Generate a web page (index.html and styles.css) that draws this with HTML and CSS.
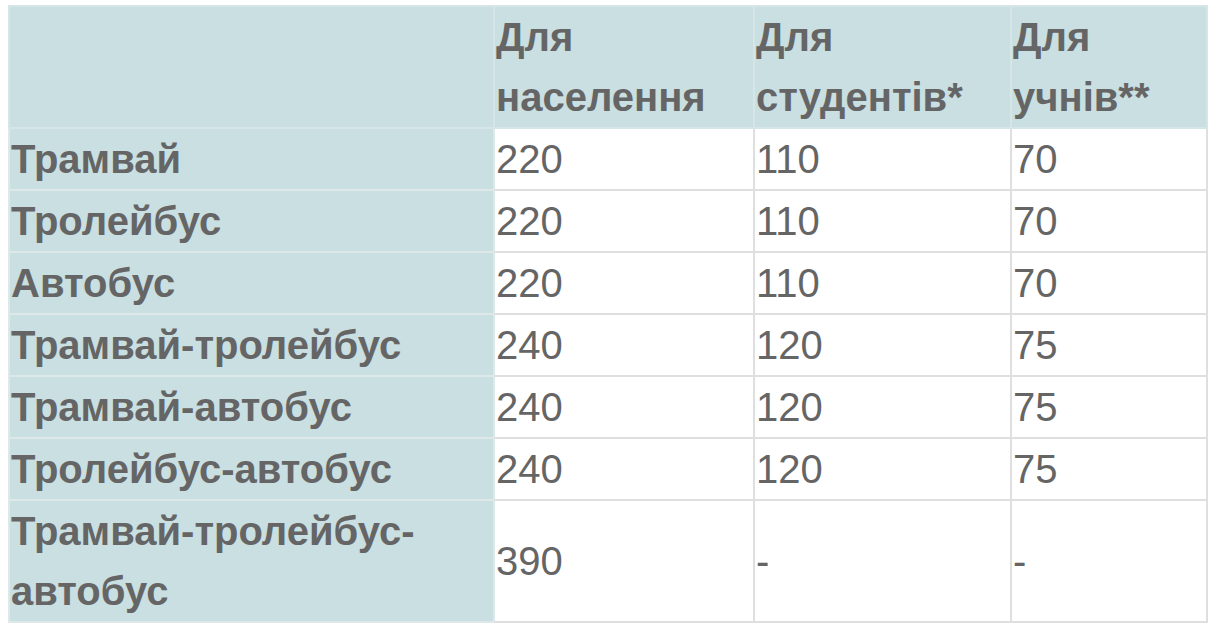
FILE: index.html
```html
<!DOCTYPE html>
<html lang="uk">
<head>
<meta charset="utf-8">
<link rel="stylesheet" href="styles.css">
</head>
<body>
<table class="fares">
  <colgroup>
    <col class="c1"><col class="c2"><col class="c3"><col class="c4">
  </colgroup>
  <thead>
    <tr><th></th><th>Для населення</th><th>Для студентів*</th><th>Для учнів**</th></tr>
  </thead>
  <tbody>
    <tr><th>Трамвай</th><td>220</td><td>110</td><td>70</td></tr>
    <tr><th>Тролейбус</th><td>220</td><td>110</td><td>70</td></tr>
    <tr><th>Автобус</th><td>220</td><td>110</td><td>70</td></tr>
    <tr><th>Трамвай-тролейбус</th><td>240</td><td>120</td><td>75</td></tr>
    <tr><th>Трамвай-автобус</th><td>240</td><td>120</td><td>75</td></tr>
    <tr><th>Тролейбус-автобус</th><td>240</td><td>120</td><td>75</td></tr>
    <tr><th>Трамвай-тролейбус-<br>автобус</th><td>390</td><td>-</td><td>-</td></tr>
  </tbody>
</table>
</body>
</html>
```
FILE: styles.css
```css
body {
  margin: 5px 8px;
  background: #fff;
  font-family: "Liberation Sans", Arial, sans-serif;
}
.fares {
  border-collapse: collapse;
  width: 1198px;
  table-layout: fixed;
  color: #656565;
  font-size: 40px;
  line-height: 60px;
}
.c1 { width: 485px; }
.c2 { width: 260px; }
.c3 { width: 257px; }
.c4 { width: 196px; }
.fares th, .fares td {
  border: 2px solid #dfdfdf;
  padding: 0 1px;
  text-align: left;
  vertical-align: middle;
}
.fares thead th {
  background: #c9dfe1;
  font-weight: bold;
  vertical-align: top;
  border-color: #d6e5e6;
}
.fares tbody th {
  background: #c9dfe1;
  font-weight: bold;
  border-color: #dfe8e9;
}
.fares td {
  background: #fff;
  font-weight: normal;
}
```
